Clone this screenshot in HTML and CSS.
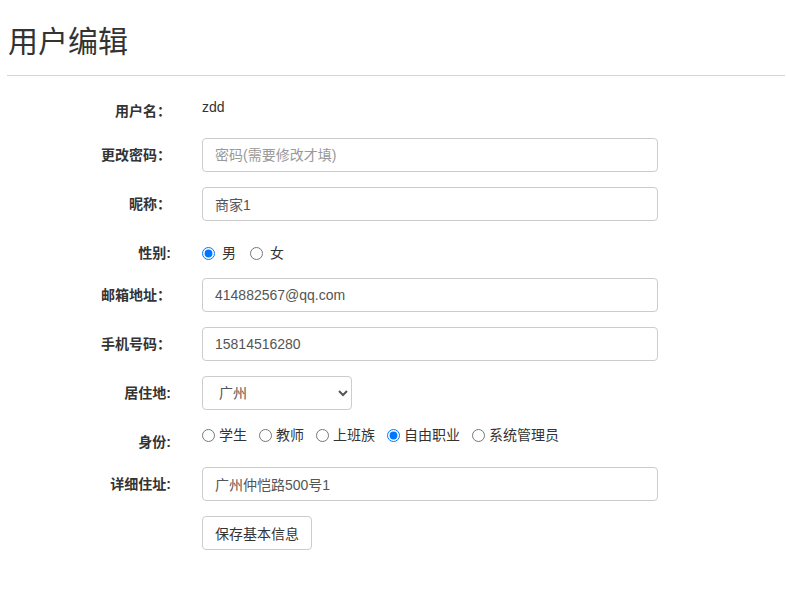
FILE: index.html
```html
<!DOCTYPE html>
<html lang="zh-CN">
<head>
  <meta charset="UTF-8">
  <title>用户编辑</title>
  <link rel="stylesheet" href="styles.css">
</head>
<body>

  <div class="container">
    <h1 class="page-title">用户编辑</h1>
    <hr class="divider">

    <form class="edit-form">
      <div class="form-group row-static">
        <label class="control-label">用户名：</label>
        <div class="controls"><p class="form-static">zdd</p></div>
      </div>

      <div class="form-group">
        <label class="control-label" for="pwd">更改密码：</label>
        <div class="controls"><input type="password" id="pwd" class="form-control" placeholder="密码(需要修改才填)"></div>
      </div>

      <div class="form-group">
        <label class="control-label" for="nick">昵称：</label>
        <div class="controls"><input type="text" id="nick" class="form-control" value="商家1"></div>
      </div>

      <div class="form-group row-radio">
        <label class="control-label">性别:</label>
        <div class="controls gender">
          <label class="radio-inline"><input type="radio" name="sex" checked>男</label>
          <label class="radio-inline"><input type="radio" name="sex">女</label>
        </div>
      </div>

      <div class="form-group">
        <label class="control-label" for="email">邮箱地址：</label>
        <div class="controls"><input type="text" id="email" class="form-control" value="414882567@qq.com"></div>
      </div>

      <div class="form-group">
        <label class="control-label" for="phone">手机号码：</label>
        <div class="controls"><input type="text" id="phone" class="form-control" value="15814516280"></div>
      </div>

      <div class="form-group">
        <label class="control-label" for="city">居住地:</label>
        <div class="controls">
          <select id="city" class="form-control city-select">
            <option>广州</option>
            <option>深圳</option>
            <option>北京</option>
          </select>
        </div>
      </div>

      <div class="form-group row-identity">
        <label class="control-label">身份:</label>
        <div class="controls identity">
          <label class="radio-inline"><input type="radio" name="role">学生</label>
          <label class="radio-inline"><input type="radio" name="role">教师</label>
          <label class="radio-inline"><input type="radio" name="role">上班族</label>
          <label class="radio-inline"><input type="radio" name="role" checked>自由职业</label>
          <label class="radio-inline"><input type="radio" name="role">系统管理员</label>
        </div>
      </div>

      <div class="form-group">
        <label class="control-label" for="addr">详细住址:</label>
        <div class="controls"><input type="text" id="addr" class="form-control" value="广州仲恺路500号1"></div>
      </div>

      <div class="form-group">
        <span class="control-label"></span>
        <div class="controls"><button type="button" class="btn-save">保存基本信息</button></div>
      </div>
    </form>
  </div>

</body>
</html>
```

FILE: styles.css
```css
body {
  margin: 0;
  padding: 0;
  font-family: "Liberation Sans", "Noto Sans CJK SC", sans-serif;
  font-size: 14px;
  color: #333;
  background: #fff;
}

.container {
  margin-left: 7px;
  width: 778px;
}

.page-title {
  margin: 25px 0 17px 1px;
  font-size: 30px;
  font-weight: normal;
  line-height: 33px;
  color: #333;
}

.divider {
  margin: 0;
  border: 0;
  border-top: 1px solid #d4d4d4;
}

.edit-form {
  margin-top: 13px;
}

.form-group {
  display: grid;
  grid-template-columns: 164px 456px;
  column-gap: 31px;
  align-items: center;
  margin-bottom: 15px;
}

.control-label {
  text-align: right;
  font-size: 14px;
  font-weight: bold;
  line-height: 20px;
  color: #333;
}

.form-control {
  display: block;
  box-sizing: border-box;
  width: 100%;
  height: 34px;
  padding: 6px 12px;
  font-family: inherit;
  font-size: 14px;
  color: #555;
  background: #fff;
  border: 1px solid #ccc;
  border-radius: 4px;
}

.form-control::placeholder {
  color: #999;
}

.city-select {
  width: 150px;
}

/* static username row */
.row-static {
  align-items: start;
  height: 34px;
}

.row-static .control-label {
  padding-top: 12px;
}

.form-static {
  margin: 0;
  padding-top: 8px;
  line-height: 20px;
  color: #333;
}

/* radio rows */
.row-radio {
  align-items: start;
  padding-top: 7px;
}

.row-identity {
  align-items: start;
}

.row-identity .control-label {
  padding-top: 7px;
}

.controls.gender,
.controls.identity {
  display: flex;
  align-items: center;
  height: 20px;
}

.radio-inline {
  display: inline-flex;
  align-items: center;
  font-size: 14px;
  line-height: 20px;
  cursor: pointer;
}

.radio-inline input {
  width: 13px;
  height: 13px;
  margin: 0;
}

.gender .radio-inline {
  margin-right: 14px;
}

.gender .radio-inline input {
  margin-right: 7px;
}

.identity .radio-inline {
  margin-right: 12px;
}

.identity .radio-inline input {
  margin-right: 4px;
}

.btn-save {
  height: 34px;
  padding: 6px 12px;
  font-family: inherit;
  font-size: 14px;
  color: #333;
  background: #fff;
  border: 1px solid #ccc;
  border-radius: 4px;
  cursor: pointer;
}

.btn-save:hover {
  background: #e6e6e6;
}
```
